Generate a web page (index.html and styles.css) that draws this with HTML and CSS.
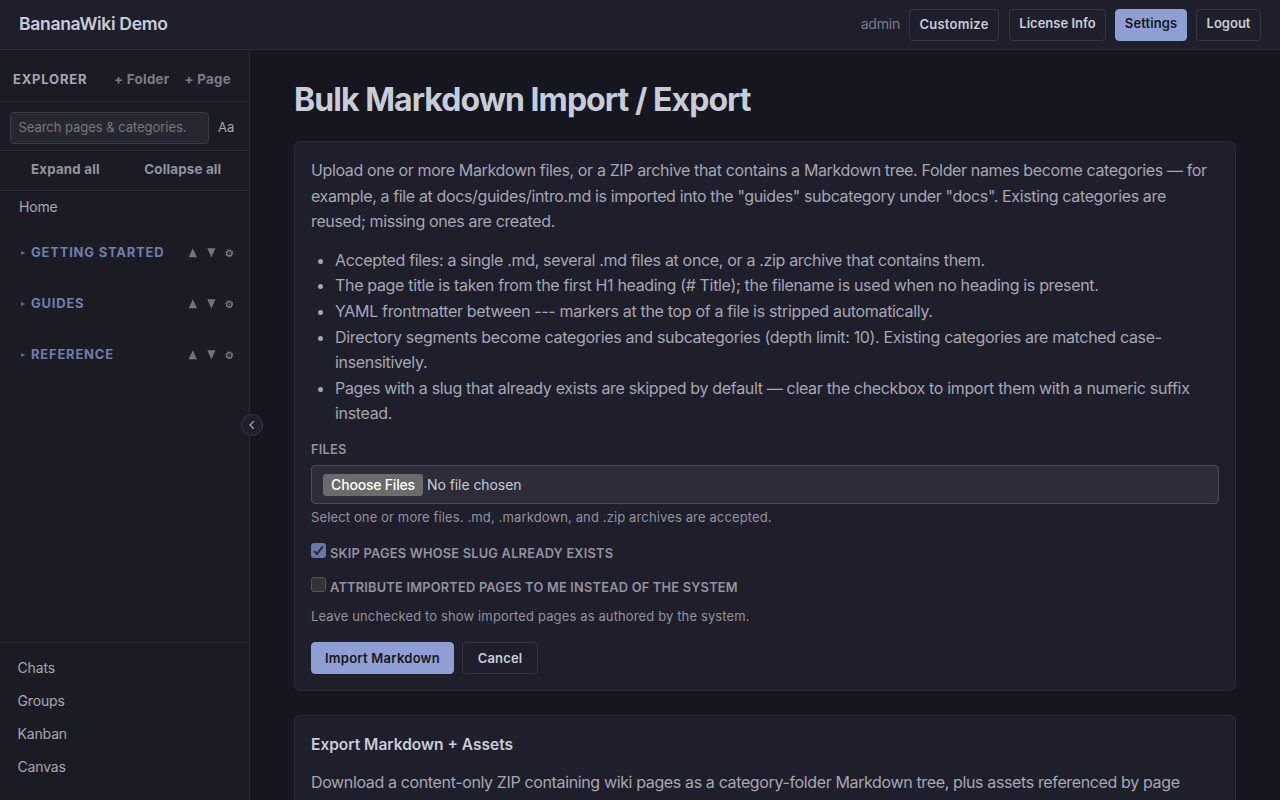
FILE: index.html
```html
<!DOCTYPE html>
<html lang="en">
<head>
    <meta charset="UTF-8">
    <meta name="viewport" content="width=device-width, initial-scale=1.0">
    <title>Bulk Markdown Import / Export - BananaWiki Demo</title>
    <link rel="stylesheet" href="styles.css">
</head>
<body>
    <header class="topbar">
        <a class="brand">BananaWiki Demo</a>
        <nav class="topnav">
            <span class="user">admin</span>
            <button class="btn btn-customize">Customize</button>
            <a class="btn btn-license">License Info</a>
            <a class="btn btn-primary btn-settings">Settings</a>
            <a class="btn btn-logout">Logout</a>
        </nav>
    </header>

    <div class="layout">
        <aside class="sidebar">
            <div class="side-head">
                <span class="side-title">Explorer</span>
                <a class="side-add add-folder">+ Folder</a>
                <a class="side-add add-page">+ Page</a>
            </div>
            <div class="side-search">
                <div class="search-box">Search pages &amp; categories.</div>
                <span class="match-case">Aa</span>
            </div>
            <div class="side-toggle">
                <span class="expand">Expand all</span>
                <span class="collapse">Collapse all</span>
            </div>
            <a class="home">Home</a>

            <div class="category">
                <svg class="caret" width="5" height="4" viewBox="0 0 5 4"><path d="M0 0L4.4 2L0 4z"/></svg>
                <span class="cat-name">Getting Started</span>
                <svg class="tools" width="46" height="10" viewBox="0 0 46 10">
                    <path d="M4.8 0.2L9 9.3H0.6z M19.3 0.3H27.5L23.4 9.4z"/>
                    <circle class="gear-teeth" cx="41.3" cy="5.2" r="3.3"/>
                    <circle class="gear" cx="41.3" cy="5.2" r="2.6"/>
                    <circle cx="41.3" cy="5.2" r="0.8"/>
                </svg>
            </div>
            <div class="category">
                <svg class="caret" width="5" height="4" viewBox="0 0 5 4"><path d="M0 0L4.4 2L0 4z"/></svg>
                <span class="cat-name">Guides</span>
                <svg class="tools" width="46" height="10" viewBox="0 0 46 10">
                    <path d="M4.8 0.2L9 9.3H0.6z M19.3 0.3H27.5L23.4 9.4z"/>
                    <circle class="gear-teeth" cx="41.3" cy="5.2" r="3.3"/>
                    <circle class="gear" cx="41.3" cy="5.2" r="2.6"/>
                    <circle cx="41.3" cy="5.2" r="0.8"/>
                </svg>
            </div>
            <div class="category">
                <svg class="caret" width="5" height="4" viewBox="0 0 5 4"><path d="M0 0L4.4 2L0 4z"/></svg>
                <span class="cat-name">Reference</span>
                <svg class="tools" width="46" height="10" viewBox="0 0 46 10">
                    <path d="M4.8 0.2L9 9.3H0.6z M19.3 0.3H27.5L23.4 9.4z"/>
                    <circle class="gear-teeth" cx="41.3" cy="5.2" r="3.3"/>
                    <circle class="gear" cx="41.3" cy="5.2" r="2.6"/>
                    <circle cx="41.3" cy="5.2" r="0.8"/>
                </svg>
            </div>

            <nav class="side-links">
                <a>Chats</a>
                <a>Groups</a>
                <a>Kanban</a>
                <a>Canvas</a>
            </nav>
            <button class="side-collapse" aria-label="Collapse sidebar">
                <svg width="8" height="10" viewBox="0 0 8 10"><path d="M5.7 1.2L2 5L5.7 8.8"/></svg>
            </button>
        </aside>

        <main class="content">
            <h1>Bulk Markdown Import / Export</h1>

            <section class="card import-card">
                <p>Upload one or more Markdown files, or a ZIP archive that contains a Markdown tree. Folder names become categories — for<br>example, a file at docs/guides/intro.md is imported into the "guides" subcategory under "docs". Existing categories are<br>reused; missing ones are created.</p>
                <ul>
                    <li>Accepted files: a single .md, several .md files at once, or a .zip archive that contains them.</li>
                    <li>The page title is taken from the first H1 heading (# Title); the filename is used when no heading is present.</li>
                    <li>YAML frontmatter between --- markers at the top of a file is stripped automatically.</li>
                    <li>Directory segments become categories and subcategories (depth limit: 10). Existing categories are matched case-<br>insensitively.</li>
                    <li>Pages with a slug that already exists are skipped by default — clear the checkbox to import them with a numeric suffix<br>instead.</li>
                </ul>

                <div class="label">Files</div>
                <div class="file-input">
                    <span class="file-btn">Choose Files</span>
                    <span class="file-none">No file chosen</span>
                </div>
                <div class="hint">Select one or more files. .md, .markdown, and .zip archives are accepted.</div>

                <div class="check-row">
                    <span class="check checked">
                        <svg width="15" height="15" viewBox="0 0 15 15"><path d="M3 7.9L6 11L11.9 3.4"/></svg>
                    </span>
                    <span class="label">Skip pages whose slug already exists</span>
                </div>
                <div class="check-row">
                    <span class="check"></span>
                    <span class="label">Attribute imported pages to me instead of the system</span>
                </div>
                <div class="hint hint-system">Leave unchecked to show imported pages as authored by the system.</div>

                <div class="actions">
                    <button class="btn btn-primary btn-import">Import Markdown</button>
                    <a class="btn btn-cancel">Cancel</a>
                </div>
            </section>

            <section class="card">
                <h3>Export Markdown + Assets</h3>
                <p>Download a content-only ZIP containing wiki pages as a category-folder Markdown tree, plus assets referenced by page</p>
            </section>
        </main>
    </div>
</body>
</html>
```
FILE: styles.css
```css
*{
    box-sizing: border-box;
    margin: 0;
    padding: 0;
}
body{
    height: 100vh;
    overflow: hidden;
    display: flex;
    flex-direction: column;
    background-color: #16161e;
    color: #c8ccd8;
    font-family: Inter, "Liberation Sans", sans-serif;
    font-size: 16px;
    line-height: 25.6px;
    white-space: nowrap;
}
.topbar{
    height: 50px;
    flex: none;
    display: flex;
    align-items: center;
    justify-content: space-between;
    padding: 0 19px;
    background-color: #1f1e2b;
    border-bottom: 1px solid #2b2b36;
}
.brand{
    font-size: 17.6px;
    font-weight: 600;
    letter-spacing: -0.35px;
    margin-top: -2px;
}
.topnav{
    display: flex;
    align-items: center;
}
.user{
    font-size: 14px;
    letter-spacing: -0.2px;
    color: #7b7c89;
    margin: -2px 9px 0 0;
}
.btn{
    display: flex;
    align-items: center;
    justify-content: center;
    height: 32px;
    border: 1px solid #363642;
    border-radius: 4px;
    background: none;
    color: #c8ccd8;
    font-family: inherit;
    font-size: 13px;
    font-weight: 600;
    line-height: 20px;
}
.btn-primary{
    background-color: #8f9fd4;
    border-color: #8f9fd4;
    color: #16161e;
}
.btn-customize{
    width: 90px;
    margin-right: 10px;
    padding-bottom: 1px;
    letter-spacing: 0.25px;
}
.btn-license{
    width: 97px;
    margin-right: 9px;
    padding-bottom: 3px;
}
.btn-settings{
    width: 72px;
    margin-right: 9px;
    padding-bottom: 3px;
    letter-spacing: 0.1px;
}
.btn-logout{
    width: 65px;
    padding-bottom: 3px;
}

.layout{
    flex: 1;
    min-height: 0;
    display: flex;
}

/* sidebar */
.sidebar{
    position: relative;
    width: 250px;
    flex: none;
    display: flex;
    flex-direction: column;
    background-color: #1b1b24;
    border-right: 1px solid #2b2b36;
    color: #a5a7b3;
}
.side-head{
    height: 52px;
    display: flex;
    align-items: center;
    padding: 9px 18px 0 13px;
    border-bottom: 1px solid #262630;
    font-size: 13px;
    font-weight: 600;
}
.side-title{
    text-transform: uppercase;
    font-weight: 700;
    letter-spacing: 0.8px;
    margin-right: auto;
}
.side-add{
    color: #7b7c89;
    font-size: 13.3px;
    font-weight: 700;
    letter-spacing: 0.3px;
}
.add-page{
    margin-left: 15px;
}
.side-search{
    height: 49px;
    display: flex;
    align-items: center;
    padding: 4px 14px 0 10px;
    border-bottom: 1px solid #262630;
}
.search-box{
    width: 199px;
    height: 32px;
    padding-left: 7.5px;
    background-color: #272731;
    border: 1px solid #393944;
    border-radius: 4px;
    color: #777777;
    font-size: 13px;
    letter-spacing: -0.04px;
    line-height: 29px;
}
.match-case{
    margin-left: 9px;
    font-size: 13px;
}
.side-toggle{
    height: 40px;
    display: flex;
    padding: 6px 0 0 31px;
    border-bottom: 1px solid #262630;
    color: #92939f;
    font-size: 13.3px;
    font-weight: 700;
    letter-spacing: 0.2px;
}
.collapse{
    margin-left: 44.5px;
}
.home{
    padding: 3px 19px 0;
    margin-bottom: 8px;
    font-size: 14px;
    letter-spacing: -0.2px;
}
.category{
    height: 51px;
    display: flex;
    align-items: center;
    padding: 0 15px 0 21px;
}
.caret{
    fill: #666773;
    margin-right: 5px;
}
.cat-name{
    color: #6f7eac;
    font-size: 13px;
    font-weight: 700;
    letter-spacing: 0.78px;
    text-transform: uppercase;
}
.tools{
    margin-left: auto;
    fill: #72737f;
}
.gear, .gear-teeth{
    fill: none;
    stroke: #72737f;
    stroke-width: 1.4;
}
.gear-teeth{
    stroke-dasharray: 1.3 1.29;
}
.side-links{
    margin-top: auto;
    height: 158px;
    display: flex;
    flex-direction: column;
    padding: 8px 17.5px;
    border-top: 1px solid #262630;
    font-size: 14px;
    letter-spacing: -0.15px;
    line-height: 33px;
}
/* round handle sits over the sidebar edge */
.side-collapse{
    position: absolute;
    top: 364px;
    right: -14px;
    width: 22px;
    height: 22px;
    display: flex;
    align-items: center;
    justify-content: center;
    background-color: #1f1e2b;
    border: 1px solid #363642;
    border-radius: 50%;
}
.side-collapse path{
    fill: none;
    stroke: #a5a7b3;
    stroke-width: 1.3;
}

/* main column */
.content{
    flex: 1;
    min-width: 0;
    padding: 30px 44px 0;
}
h1{
    font-size: 32px;
    font-weight: 700;
    line-height: 40px;
    letter-spacing: -0.94px;
    margin-bottom: 21px;
}
.card{
    padding: 16px;
    background-color: #1f1e2b;
    border: 1px solid #2b2b36;
    border-radius: 6px;
    color: #a5a7b3;
    margin-bottom: 24px;
}
.import-card{
    height: 550px;
}
.card p{
    letter-spacing: -0.365px;
}
.card li{
    letter-spacing: -0.33px;
}
.card ul{
    padding-left: 24px;
    margin: 13px 0 9px;
}
.label{
    color: #92939f;
    font-size: 12.8px;
    font-weight: 600;
    letter-spacing: 0.22px;
    line-height: 26px;
    text-transform: uppercase;
    padding-top: 1px;
}
.file-input{
    height: 39px;
    display: flex;
    align-items: center;
    margin-top: 2px;
    padding-left: 11px;
    background-color: #2d2c38;
    border: 1px solid #4b4b57;
    border-radius: 4px;
    color: #c8ccd8;
    font-size: 14px;
}
.file-btn{
    width: 100px;
    height: 22px;
    margin: 1px 4px 0 0;
    background-color: #6b6b6b;
    border-radius: 3px;
    color: #ffffff;
    font-weight: 500;
    letter-spacing: -0.2px;
    line-height: 22px;
    text-align: center;
}
.file-none{
    letter-spacing: -0.07px;
}
.hint{
    color: #92939f;
    font-size: 13px;
    letter-spacing: 0.13px;
    line-height: 26px;
}
.hint-system{
    margin-top: -1px;
}
.check-row{
    height: 34px;
    display: flex;
    align-items: center;
}
.check-row .label{
    padding-top: 2px;
}
.hint + .check-row{
    margin-top: 6px;
}
.check{
    width: 15px;
    height: 15px;
    margin: -5px 4px 0 0;
    background-color: #333333;
    border: 1px solid #555555;
    border-radius: 3px;
}
.check.checked{
    display: flex;
    background-color: #6877ad;
    border: none;
}
.check path{
    fill: none;
    stroke: #2c2c32;
    stroke-width: 2.1;
}
.actions{
    display: flex;
    gap: 8px;
    margin-top: 13px;
}
.btn-import{
    width: 143px;
    letter-spacing: 0.25px;
}
.btn-cancel{
    width: 76px;
    letter-spacing: 0.15px;
}
h3{
    color: #c8ccd8;
    font-size: 15.5px;
    font-weight: 600;
    line-height: 24px;
    margin: 1px 0 13px;
}
```
